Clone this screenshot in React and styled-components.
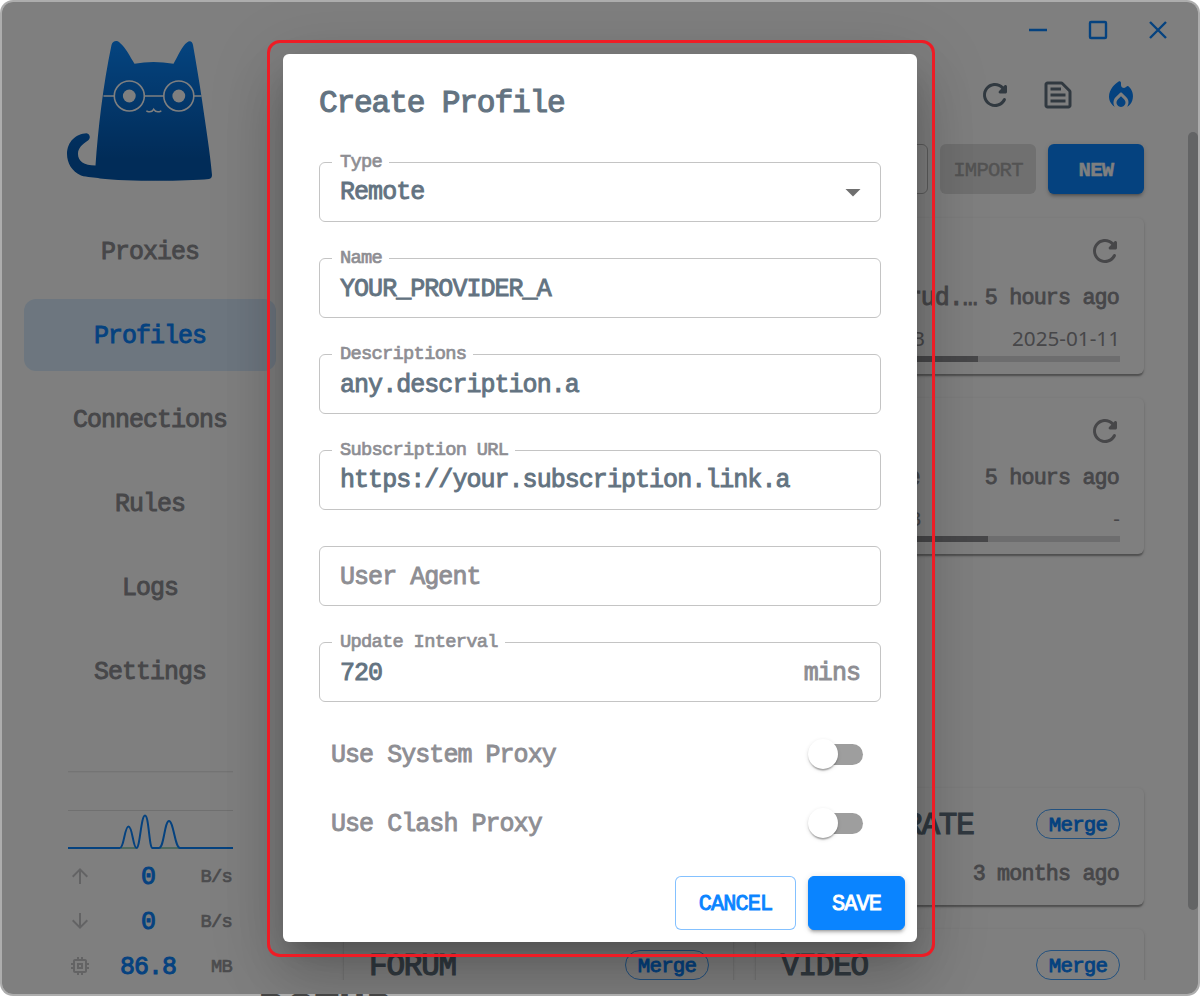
import React from "react";
import styled, { createGlobalStyle, css } from "styled-components";

const PRIMARY = "#0a84ff";
const TEXT = "#637381";
const MUTED = "#8e8e93";

const Global = createGlobalStyle`
  *, *::before, *::after { box-sizing: border-box; }
  body { margin: 0; background: #fff; overflow: hidden; }
`;

/* Monospaced text with a fixed advance per character. */
const mono = (pitch, stroke = 0.9) => css`
  font-family: "Liberation Mono", "DejaVu Sans Mono", monospace;
  font-size: ${pitch * 1.78}px;
  font-weight: 400;
  letter-spacing: ${-pitch * 0.068}px;
  line-height: 1.2;
  padding-top: 4px;
  white-space: pre;
  -webkit-text-stroke: ${stroke}px currentColor;
`;

const Desktop = styled.div`
  position: relative;
  width: 1200px;
  height: 996px;
  overflow: hidden;
  background: #fff;
`;

const PageHeading = styled.div`
  position: absolute;
  left: 258px;
  top: 989px;
  font: bold 34px/1 "DejaVu Sans", sans-serif;
  color: #666;
`;

const Window = styled.div`
  position: relative;
  display: flex;
  width: 1200px;
  height: 996px;
  border: 2px solid rgba(0, 0, 0, 0.32);
  border-radius: 13px;
  background: #fff;
  background-clip: padding-box;
  overflow: hidden;
`;

const Sidebar = styled.aside`
  display: flex;
  flex-direction: column;
  width: 296px;
  padding: 38px 22px 0;
`;

const Logo = styled.svg`
  display: block;
  width: 147px;
  height: 142px;
  margin: 0 0 33px 42px;
`;

const Nav = styled.nav`
  display: flex;
  flex-direction: column;
  gap: 12px;
`;

const NavItem = styled.a`
  ${mono(14)}
  display: flex;
  align-items: center;
  justify-content: center;
  height: 72px;
  border-radius: 12px;
  color: ${(p) => (p.$active ? PRIMARY : MUTED)};
  background: ${(p) => (p.$active ? "rgba(10, 132, 255, 0.15)" : "transparent")};
`;

const Traffic = styled.div`
  width: 165px;
  margin: 61px 0 0 44px;
`;

const Graph = styled.svg`
  display: block;
  width: 165px;
  height: 85px;
`;

const Stat = styled.div`
  display: grid;
  grid-template-columns: 24px 1fr 32px;
  align-items: center;
  height: 45px;
`;

const StatIcon = styled.svg`
  width: 24px;
  height: 24px;
  fill: #c6c6c9;
`;

const StatValue = styled.span`
  ${mono(14, 1)}
  color: ${PRIMARY};
  text-align: center;
  margin-left: 3px;
`;

const StatUnit = styled.span`
  ${mono(10.5, 0.7)}
  color: #98989c;
  justify-self: end;
  margin-right: 1px;
`;

const Main = styled.main`
  display: flex;
  flex-direction: column;
  flex: 1;
  padding: 10px 0 14px 46px;
`;

const TitleBar = styled.div`
  display: flex;
  justify-content: flex-end;
  align-items: center;
  gap: 24px;
  height: 36px;
  padding-right: 22px;
`;

const WindowIcon = styled.svg`
  width: 36px;
  height: 36px;
  fill: none;
  stroke: ${PRIMARY};
  stroke-width: 2.4;
`;

const Header = styled.header`
  display: flex;
  justify-content: flex-end;
  align-items: flex-start;
  gap: 27px;
  height: 96px;
  padding: 29px 59px 0 0;
`;

const Glyph = styled.svg`
  width: 36px;
  height: 36px;
  fill: ${(p) => p.$color || TEXT};
`;

const Toolbar = styled.div`
  display: flex;
  gap: 12px;
  height: 50px;
  width: 800px;
`;

const UrlInput = styled.div`
  flex: 1;
  border: 1px solid #b8b8b8;
  border-radius: 6px;
`;

const ToolButton = styled.div`
  ${mono(11.6, 0.4)}
  display: flex;
  align-items: center;
  justify-content: center;
  width: 96px;
  border-radius: 6px;
  color: ${(p) => (p.$primary ? "#fff" : "#a6a6a6")};
  font-weight: ${(p) => (p.$primary ? 700 : 400)};
  background: ${(p) => (p.$primary ? PRIMARY : "#e0e0e0")};
  box-shadow: ${(p) => (p.$primary ? "0 4px 2px -3px rgba(0,0,0,.2), 0 3px 3px rgba(0,0,0,.14), 0 1px 7px rgba(0,0,0,.12)" : "none")};
`;

const Scroller = styled.div`
  display: grid;
  flex: none;
  grid-template-columns: 389px 388px;
  grid-template-rows: 156px 156px 186px 117px 118px;
  gap: 24px 23px;
  height: 786px;
  padding-top: 24px;
  overflow: hidden;
  margin-left: -4px;
  padding-left: 4px;
`;

const Card = styled.section`
  display: flex;
  flex-direction: column;
  grid-row: ${(p) => p.$row};
  grid-column: ${(p) => p.$col};
  padding: ${(p) => (p.$short ? "18px 24px 0 25px" : "15px 24px 0 25px")};
  border-radius: 6px;
  background: #fff;
  box-shadow: 0 3px 1.5px -1.5px rgba(0, 0, 0, 0.2), 0 1.5px 1.5px rgba(0, 0, 0, 0.14), 0 1.5px 4.5px rgba(0, 0, 0, 0.12);
`;

const CardTop = styled.div`
  display: flex;
  justify-content: ${(p) => (p.$end ? "flex-end" : "space-between")};
  align-items: center;
  height: 36px;
  margin-right: ${(p) => (p.$end ? "-3px" : "0")};
`;

const CardTitle = styled.h2`
  ${mono(17.4, 1.2)}
  margin: 0;
  color: ${TEXT};
  padding-left: ${(p) => p.$indent || 0}px;
`;

const Chip = styled.span`
  ${mono(11.7)}
  display: flex;
  align-items: center;
  justify-content: center;
  width: 84px;
  height: 30px;
  border: 1px solid rgba(10, 132, 255, 0.75);
  border-radius: 15px;
  color: ${PRIMARY};
`;

const CardLine = styled.div`
  display: flex;
  justify-content: flex-end;
  align-items: center;
  height: ${(p) => p.$h}px;
  margin-top: ${(p) => p.$mt || 0}px;
`;

const Source = styled.span`
  ${mono(14)}
  color: ${MUTED};
  margin-right: ${(p) => p.$gap}px;
`;

const Ago = styled.span`
  ${mono(12.2, 0.8)}
  color: ${MUTED};
  margin-right: 1px;
`;

const Usage = styled.span`
  font: 20.7px/28px "Noto Sans", sans-serif;
  color: ${MUTED};
  margin-right: ${(p) => p.$gap || 0}px;
`;

const Track = styled.div`
  height: 6px;
  margin-top: ${(p) => p.$mt}px;
  background: #dadbdd;
`;

const Fill = styled.div`
  height: 6px;
  width: ${(p) => p.$value}px;
  background: ${MUTED};
`;

const ScrollThumb = styled.div`
  position: absolute;
  right: 0;
  top: 130px;
  width: 10px;
  height: 778px;
  border-radius: 5px;
  background: #c6c8cb;
`;

const Scrim = styled.div`
  position: absolute;
  inset: 0;
  display: flex;
  align-items: center;
  justify-content: center;
  background: rgba(0, 0, 0, 0.5);
`;

const Dialog = styled.div`
  display: flex;
  flex-direction: column;
  width: 634px;
  height: 888px;
  padding: 0 36px 12px;
  border-radius: 6px;
  background: #fff;
  box-shadow: 0 16px 22px -10px rgba(0, 0, 0, 0.2), 0 36px 57px 4px rgba(0, 0, 0, 0.14), 0 13px 69px 12px rgba(0, 0, 0, 0.12);
`;

const DialogTitle = styled.h1`
  ${mono(17.55, 1.1)}
  display: flex;
  align-items: center;
  height: 96px;
  margin: 0 0 12px;
  color: ${TEXT};
`;

const Fields = styled.div`
  display: flex;
  flex-direction: column;
  gap: 36px;
`;

const Field = styled.div`
  position: relative;
  display: flex;
  align-items: center;
  justify-content: space-between;
  height: 60px;
  padding: 0 20px;
  border: 1px solid #c4c4c4;
  border-radius: 6px;
`;

const FieldLabel = styled.label`
  ${mono(10.52, 0.7)}
  position: absolute;
  left: 12px;
  top: -12px;
  padding: 0 7px 0 8px;
  color: ${MUTED};
  background: #fff;
`;

const FieldValue = styled.span`
  ${mono(14.05)}
  color: ${(p) => (p.$muted ? MUTED : TEXT)};
  margin-bottom: ${(p) => p.$lift || 0}px;
`;

const Caret = styled.svg`
  width: 36px;
  height: 36px;
  margin-right: -11px;
  fill: #6f6f6f;
`;

const SwitchRow = styled.div`
  display: flex;
  align-items: center;
  justify-content: space-between;
  height: 69px;
  padding: 0 18px 0 12px;
`;

const Switches = styled.div`
  margin-top: 18px;
`;

const SwitchLabel = styled.span`
  ${mono(14.05)}
  color: ${MUTED};
`;

const Switch = styled.span`
  display: flex;
  align-items: center;
  width: 51px;
  height: 21px;
  border-radius: 11px;
  background: #9e9e9e;
`;

const Thumb = styled.span`
  flex: none;
  width: 30px;
  height: 30px;
  margin: 0 0 1px -4px;
  border-radius: 50%;
  background: #fff;
  box-shadow: 0 3px 1.5px -1.5px rgba(0, 0, 0, 0.2), 0 1.5px 1.5px rgba(0, 0, 0, 0.14), 0 1.5px 4.5px rgba(0, 0, 0, 0.12);
`;

const Actions = styled.div`
  display: flex;
  justify-content: flex-end;
  gap: 12px;
  margin: auto -24px 0 0;
`;

const ActionButton = styled.button`
  ${mono(12.3, 0.9)}
  height: 54px;
  width: ${(p) => (p.$primary ? 97 : 121)}px;
  padding: 4px 0 0;
  border: 1px solid ${(p) => (p.$primary ? PRIMARY : "rgba(10,132,255,.5)")};
  border-radius: 6px;
  color: ${(p) => (p.$primary ? "#fff" : PRIMARY)};
  background: ${(p) => (p.$primary ? PRIMARY : "#fff")};
  box-shadow: ${(p) => (p.$primary ? "0 4px 2px -3px rgba(0,0,0,.2), 0 3px 3px rgba(0,0,0,.14), 0 1px 7px rgba(0,0,0,.12)" : "none")};
`;

const Highlight = styled.div`
  position: absolute;
  left: 267px;
  top: 40px;
  width: 668px;
  height: 917px;
  border: 3px solid #ee1c25;
  border-radius: 13px;
`;

const REFRESH =
  "M17.65 6.35c-1.63-1.63-3.94-2.57-6.48-2.31-3.67.37-6.69 3.35-7.1 7.02C3.52 15.91 7.27 20 12 20c3.19 0 5.93-1.87 7.21-4.56.32-.67-.16-1.44-.9-1.44-.37 0-.72.2-.88.53-1.13 2.43-3.84 3.97-6.8 3.31-2.22-.49-4.01-2.3-4.48-4.52C5.31 9.44 8.26 6 12 6c1.66 0 3.14.69 4.22 1.78l-1.51 1.51c-.63.63-.19 1.71.7 1.71H19c.55 0 1-.45 1-1V6.41c0-.89-1.08-1.34-1.71-.71l-.64.65z";
const SNIPPET =
  "M14.17 5 19 9.83V19H5V5h9.17m0-2H5c-1.1 0-2 .9-2 2v14c0 1.1.9 2 2 2h14c1.1 0 2-.9 2-2V9.83c0-.53-.21-1.04-.59-1.41l-4.83-4.83c-.37-.38-.88-.59-1.41-.59zM7 15h10v2H7v-2zm0-4h10v2H7v-2zm0-4h7v2H7V7z";
const FIRE =
  "M12 12.9l-2.03 2c-.46.46-.82 1.03-.93 1.67C8.74 18.41 10.18 20 12 20s3.26-1.59 2.96-3.42c-.11-.64-.46-1.22-.93-1.67L12 12.9zM15.56 6.55C14.38 8.02 12 7.19 12 5.3V3.77c0-.8-.89-1.28-1.55-.84C8.12 4.49 4 7.97 4 13c0 2.92 1.56 5.47 3.89 6.86-.81-1.16-1.15-2.67-.72-4.25.24-.86.73-1.63 1.37-2.26L11.3 10.64c.39-.38 1.01-.38 1.4 0l2.73 2.69c.64.63 1.13 1.38 1.37 2.24.43 1.57.09 3.1-.71 4.26 1.57-.96 2.8-2.45 3.43-4.24 1.23-3.49.1-7.1-2.47-9.34-.44-.38-1.07-.2-1.49.3z";
const UP = "M4 12l1.41 1.41L11 7.83V20h2V7.83l5.58 5.59L20 12l-8-8-8 8z";
const DOWN = "M20 12l-1.41-1.41L13 16.17V4h-2v12.17l-5.58-5.59L4 12l8 8 8-8z";
const CHIP =
  "M15 9H9v6h6V9zm-2 4h-2v-2h2v2zm8-2V9h-2V7c0-1.1-.9-2-2-2h-2V3h-2v2h-2V3H9v2H7c-1.1 0-2 .9-2 2v2H3v2h2v2H3v2h2v2c0 1.1.9 2 2 2h2v2h2v-2h2v2h2v-2h2c1.1 0 2-.9 2-2v-2h2v-2h-2v-2h2zm-4 6H7V7h10v10z";

const navItems = ["Proxies", "Profiles", "Connections", "Rules", "Logs", "Settings"];
const stats = [
  { icon: UP, value: "0", unit: "B/s" },
  { icon: DOWN, value: "0", unit: "B/s" },
  { icon: CHIP, value: "86.8", unit: "MB" },
];
const fields = [
  { label: "Type", value: "Remote", select: true, lift: 2 },
  { label: "Name", value: "YOUR_PROVIDER_A" },
  { label: "Descriptions", value: "any.description.a" },
  { label: "Subscription URL", value: "https://your.subscription.link.a", lift: 2 },
  { placeholder: "User Agent" },
  { label: "Update Interval", value: "720", suffix: "mins" },
];

function CatLogo() {
  return (
    <Logo viewBox="66 40 147 142">
      <defs>
        <linearGradient id="cat" x1="0" y1="0" x2="0" y2="1">
          <stop offset="0" stopColor="#0a88ff" />
          <stop offset="0.85" stopColor="#0358b0" />
          <stop offset="1" stopColor="#0358b0" />
        </linearGradient>
      </defs>
      <path
        fill="url(#cat)"
        d="M95.5 165.500C98 130 103 85 111.500 45C112.500 41 117 39.500 120 43C126 48 129.500 56 134.500 63.800Q153 60.200 173.500 63.800C178 56 182 46 187 42.500C189.500 40 192.500 41 193 45C196 62 199 80 202 100C206 128 210 152 212 175Q212 178.500 209 179C185 181.500 125 181.500 100 178.500C95 177 87 177.500 81 175.500C72 171.500 67 163 67 154C67 142 76 133.500 86.500 133.300C90 134 91 138 88 140.500C82 144.500 78 148 78 154C78 161 84 165.500 95.500 165.500Z"
      />
      <g fill="none" stroke="#fff" strokeWidth="1.6">
        <circle cx="129.300" cy="96" r="15" />
        <circle cx="178.800" cy="96" r="15" />
        <path d="M103.500 96H114.300M144.300 96H163.800M193.800 96H201.500" />
        <path d="M147 111.200Q151.500 113 153.700 109.300Q156 113 160.700 111.200" strokeLinecap="round" />
      </g>
      <circle cx="129.300" cy="96" r="6.400" fill="#fff" />
      <circle cx="178.800" cy="96" r="6.400" fill="#fff" />
    </Logo>
  );
}

function Icon({ d, color }) {
  return (
    <Glyph viewBox="0 0 24 24" $color={color}>
      <path d={d} />
    </Glyph>
  );
}

function ProfileCard({ row, source, sourceGap, used, usedGap, expires, value }) {
  return (
    <Card $row={row} $col={2}>
      <CardTop $end>
        <Icon d={REFRESH} color={MUTED} />
      </CardTop>
      <CardLine $h={30} $mt={13}>
        <Source $gap={sourceGap}>{source}</Source>
        <Ago>5 hours ago</Ago>
      </CardLine>
      <CardLine $h={28} $mt={12}>
        <Usage $gap={usedGap}>{used}</Usage>
        <Usage>{expires}</Usage>
      </CardLine>
      <Track $mt={4}>
        <Fill $value={value} />
      </Track>
    </Card>
  );
}

export default function App() {
  return (
    <Desktop>
      <Global />
      <PageHeading>DOTUP</PageHeading>
      <Window>
        <Sidebar>
          <CatLogo />
          <Nav>
            {navItems.map((n) => (
              <NavItem key={n} $active={n === "Profiles"}>
                {n}
              </NavItem>
            ))}
          </Nav>
          <Traffic>
            <Graph viewBox="68 768 165 85">
              <path d="M68 771.800H233M68 810.500H233" stroke="#e0e0e0" />
              <path d="M121 848H136M160 848H180" stroke="#7fc4a8" strokeWidth="1.500" />
              <path
                d="M68 848H120C124 848 124.500 826.500 128.500 826.500S133 848 136.500 848S141 815.500 145 815.500S149 848 152.500 848H159C164 848 164.500 821 169 821S175 848 180 848H233"
                fill="none"
                stroke={PRIMARY}
                strokeWidth="2"
              />
            </Graph>
            {stats.map((s, i) => (
              <Stat key={i}>
                <StatIcon viewBox="0 0 24 24">
                  <path d={s.icon} />
                </StatIcon>
                <StatValue>{s.value}</StatValue>
                <StatUnit>{s.unit}</StatUnit>
              </Stat>
            ))}
          </Traffic>
        </Sidebar>
        <Main>
          <TitleBar>
            <WindowIcon viewBox="0 0 36 36">
              <path d="M9 18H27" />
            </WindowIcon>
            <WindowIcon viewBox="0 0 36 36">
              <rect x="10" y="10" width="16" height="16" rx="1" />
            </WindowIcon>
            <WindowIcon viewBox="0 0 36 36">
              <path d="M10 10L26 26M26 10L10 26" />
            </WindowIcon>
          </TitleBar>
          <Header>
            <Icon d={REFRESH} />
            <Icon d={SNIPPET} />
            <Icon d={FIRE} color={PRIMARY} />
          </Header>
          <Toolbar>
            <UrlInput />
            <ToolButton>IMPORT</ToolButton>
            <ToolButton $primary>NEW</ToolButton>
          </Toolbar>
          <Scroller>
            <Card $row={1} $col={1} />
            <ProfileCard row={1} source="rud.…" sourceGap={8} used="B" usedGap={87} expires="2025-01-11" value={197} />
            <Card $row={2} $col={1} />
            <ProfileCard row={2} source="e" sourceGap={65} used="B" usedGap={192} expires="-" value={207} />
            <Card $row={4} $col={1} />
            <Card $row={4} $col={2} $short>
              <CardTop>
                <CardTitle $indent={123}>RATE</CardTitle>
                <Chip>Merge</Chip>
              </CardTop>
              <CardLine $h={30} $mt={16}>
                <Ago>3 months ago</Ago>
              </CardLine>
            </Card>
            <Card $row={5} $col={1} $short>
              <CardTop>
                <CardTitle>FORUM</CardTitle>
                <Chip>Merge</Chip>
              </CardTop>
            </Card>
            <Card $row={5} $col={2} $short>
              <CardTop>
                <CardTitle>VIDEO</CardTitle>
                <Chip>Merge</Chip>
              </CardTop>
            </Card>
          </Scroller>
        </Main>
        <ScrollThumb />
        <Scrim>
          <Dialog>
            <DialogTitle>Create Profile</DialogTitle>
            <Fields>
              {fields.map((f, i) => (
                <Field key={i}>
                  {f.label && <FieldLabel>{f.label}</FieldLabel>}
                  <FieldValue $muted={!f.value} $lift={f.lift}>
                    {f.value || f.placeholder}
                  </FieldValue>
                  {f.select && (
                    <Caret viewBox="0 0 24 24">
                      <path d="M7 10l5 5 5-5z" />
                    </Caret>
                  )}
                  {f.suffix && <FieldValue $muted>{f.suffix}</FieldValue>}
                </Field>
              ))}
            </Fields>
            <Switches>
              {["Use System Proxy", "Use Clash Proxy"].map((s) => (
                <SwitchRow key={s}>
                  <SwitchLabel>{s}</SwitchLabel>
                  <Switch>
                    <Thumb />
                  </Switch>
                </SwitchRow>
              ))}
            </Switches>
            <Actions>
              <ActionButton>CANCEL</ActionButton>
              <ActionButton $primary>SAVE</ActionButton>
            </Actions>
          </Dialog>
        </Scrim>
      </Window>
      <Highlight />
    </Desktop>
  );
}
